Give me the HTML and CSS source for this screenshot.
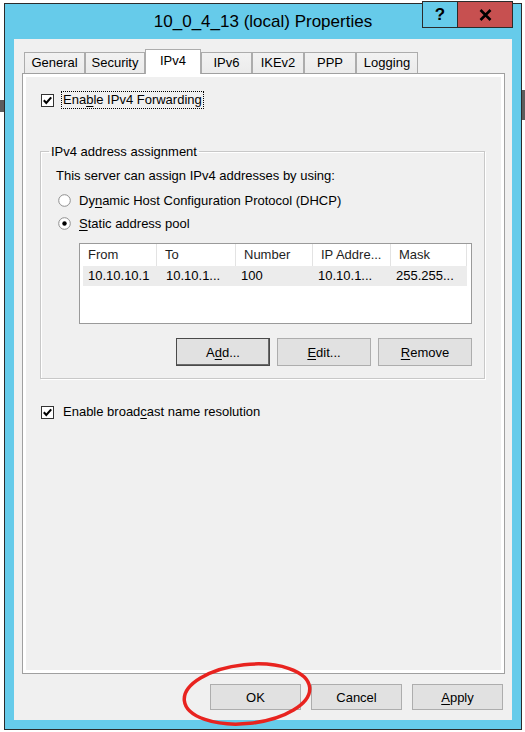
FILE: index.html
```html
<!DOCTYPE html>
<html>
<head>
<meta charset="utf-8">
<link rel="stylesheet" href="styles.css">
</head>
<body>
<div class="desk">
  <div class="window">
    <div class="titlebar">
      <span class="title">10_0_4_13 (local) Properties</span>
      <div class="caption">
        <span class="cbtn help">?</span>
        <span class="cbtn close">
          <svg width="13" height="12" viewBox="0 0 13 12"><path d="M1.5 1 L11.5 11 M11.5 1 L1.5 11" stroke="#000" stroke-width="2.6" fill="none"/></svg>
        </span>
      </div>
    </div>
    <div class="client">
      <div class="tabs">
        <span class="tab tab-general">General</span>
        <span class="tab tab-security">Security</span>
        <span class="tab tab-ipv4 selected">IPv4</span>
        <span class="tab tab-ipv6">IPv6</span>
        <span class="tab tab-ikev2">IKEv2</span>
        <span class="tab tab-ppp">PPP</span>
        <span class="tab tab-logging">Logging</span>
      </div>
      <div class="page">
        <div class="check">
          <svg class="cbox" width="13" height="13" viewBox="0 0 13 13"><rect x="0.5" y="0.5" width="12" height="12" fill="#fff" stroke="#333"/><path d="M2.8 6.2 L5.3 8.9 L10.2 3.4" stroke="#000" stroke-width="2.1" fill="none"/></svg>
          <span class="check-label focus">Ena<u>b</u>le IPv4 Forwarding</span>
        </div>
        <fieldset class="group">
          <legend>IPv4 address assignment</legend>
          <div class="group-body">
            <div class="line">This server can assign IPv4 addresses by using:</div>
            <div class="line radio-line">
              <svg class="radio" width="13" height="13" viewBox="0 0 13 13"><circle cx="6.5" cy="6.5" r="5.8" fill="#fff" stroke="#8f8f8f"/></svg>
              <span class="radio-label">Dy<u>n</u>amic Host Configuration Protocol (DHCP)</span>
            </div>
            <div class="line radio-line">
              <svg class="radio" width="13" height="13" viewBox="0 0 13 13"><circle cx="6.5" cy="6.5" r="5.8" fill="#fff" stroke="#8f8f8f"/><circle cx="6.5" cy="6.5" r="2.2" fill="#000"/></svg>
              <span class="radio-label"><u>S</u>tatic address pool</span>
            </div>
            <div class="listview">
              <div class="lv-head">
                <span class="lv-col">From</span>
                <span class="lv-col">To</span>
                <span class="lv-col">Number</span>
                <span class="lv-col">IP Addre...</span>
                <span class="lv-col">Mask</span>
                <span class="lv-col lv-rest"></span>
              </div>
              <div class="lv-row">
                <span class="lv-cell">10.10.10.1</span>
                <span class="lv-cell lv-to">10.10.1...</span>
                <span class="lv-cell">100</span>
                <span class="lv-cell">10.10.1...</span>
                <span class="lv-cell">255.255...</span>
              </div>
            </div>
            <div class="pool-buttons">
              <span class="btn btn-pool btn-default">A<u>d</u>d...</span>
              <span class="btn btn-pool"><u>E</u>dit...</span>
              <span class="btn btn-pool"><u>R</u>emove</span>
            </div>
          </div>
        </fieldset>
        <div class="check check-broadcast">
          <svg class="cbox" width="13" height="13" viewBox="0 0 13 13"><rect x="0.5" y="0.5" width="12" height="12" fill="#fff" stroke="#333"/><path d="M2.8 6.2 L5.3 8.9 L10.2 3.4" stroke="#000" stroke-width="2.1" fill="none"/></svg>
          <span class="check-label plain">Enable broad<u>c</u>ast name resolution</span>
        </div>
      </div>
      <div class="footer">
        <span class="btn btn-foot">OK</span>
        <span class="btn btn-foot">Cancel</span>
        <span class="btn btn-foot"><u>A</u>pply</span>
      </div>
    </div>
  </div>
  <svg class="highlight" width="140" height="72" viewBox="0 0 140 72">
    <ellipse cx="67" cy="34" rx="63" ry="29.5" transform="rotate(-6 67 34)" fill="none" stroke="#e8231f" stroke-width="3.5"/>
  </svg>
</div>
</body>
</html>
```
FILE: styles.css
```css
* { box-sizing: border-box; }
html, body { margin: 0; padding: 0; }
body {
  background: #ffffff;
  font-family: "Liberation Sans", Arial, sans-serif;
  font-size: 13px;
  color: #000;
}
u { text-decoration: underline; text-underline-offset: 2px; }

.desk {
  position: relative;
  width: 525px;
  height: 732px;
  overflow: hidden;
  padding: 3px 0 0 4px;
  background:
    linear-gradient(#5c5c5c, #5c5c5c) 0 100px / 4px 12px no-repeat,
    linear-gradient(#5c5c5c, #5c5c5c) 521px 90px / 4px 30px no-repeat,
    #ffffff;
}

.window {
  position: relative;
  width: 518px;
  height: 727px;
  border: 1px solid #2b2b2b;
  background: #66cbea;
  display: flex;
  flex-direction: column;
}

.titlebar {
  height: 35px;
  display: flex;
  align-items: center;
  justify-content: center;
  font-size: 17px;
  color: #000;
}

.caption {
  position: absolute;
  top: -3px;
  right: 8px;
  display: flex;
}
.cbtn {
  height: 27px;
  border: 1px solid #2b2b2b;
  display: flex;
  align-items: center;
  justify-content: center;
}
.help {
  width: 35px;
  border-right: none;
  background: #66cbea;
  font-weight: bold;
  font-size: 17px;
}
.close {
  width: 56px;
  background: #c75050;
}

.client {
  flex: 1;
  margin: 0 9px 9px;
  background: #f0f0f0;
  display: flex;
  flex-direction: column;
  padding: 10px 7px 10px 8px;
}

.tabs {
  display: flex;
  align-items: flex-end;
  height: 24px;
  margin-left: 2px;
  position: relative;
  z-index: 1;
}
.tab {
  height: 21px;
  border: 1px solid #acacac;
  border-bottom: none;
  background: linear-gradient(#f2f2f2, #ebebeb);
  display: flex;
  align-items: center;
  justify-content: center;
  padding-bottom: 1px;
}
.tab.selected {
  height: 25px;
  margin-bottom: -1px;
  background: #fff;
  padding-bottom: 3px;
}
.tab-general { width: 61px; }
.tab-security { width: 60px; }
.tab-ipv4 { width: 56px; }
.tab-ipv6 { width: 51px; }
.tab-ikev2 { width: 52px; }
.tab-ppp { width: 52px; }
.tab-logging { width: 62px; }

.page {
  flex: 1;
  border: 1px solid #a0a0a0;
  box-shadow: inset 0 0 0 3px #fff;
  background: #f0f0f0;
  padding: 17px 19px 0 17px;
}

.check {
  display: flex;
  align-items: center;
  height: 18px;
  margin-left: 1px;
}
.cbox { flex: none; }
.check-label { line-height: 16px; }
.check-label.focus {
  margin-left: 7px;
  border: 1px dotted #000;
  padding: 0 1px;
}
.check-label.plain { margin-left: 9px; }
.check-broadcast { margin-top: 24px; }

.group {
  margin: 34px 0 0 0;
  padding: 0;
  border: 1px solid #c8c8c8;
  box-shadow: inset 1px 1px 0 #fff, 1px 1px 0 #fff;
  min-width: 0;
}
.group legend {
  margin-left: 8px;
  padding: 0 2px;
  line-height: 17px;
}
.group-body {
  padding: 4px 12px 12px 15px;
}
.line {
  height: 22px;
  display: flex;
  align-items: center;
}
.radio-line { margin-top: 3px; margin-left: 2px; }
.radio-line + .radio-line { margin-top: 1px; }
.radio { flex: none; }
.radio-label { margin-left: 8px; }

.listview {
  margin-top: 9px;
  margin-left: 23px;
  height: 81px;
  border: 1px solid #9a9a9a;
  background: #fff;
}
.lv-head {
  display: grid;
  grid-template-columns: 77px 79px 77px 78px 76px 1fr;
  height: 22px;
}
.lv-col {
  border-right: 1px solid #e3e3e3;
  padding-left: 8px;
  line-height: 22px;
  color: #1e1e1e;
  white-space: nowrap;
}
.lv-rest { border-right: none; }
.lv-row {
  display: grid;
  grid-template-columns: 74px 79px 77px 78px 76px;
  width: 384px;
  margin-left: 3px;
  height: 20px;
  background: #ececec;
}
.lv-cell {
  padding-left: 5px;
  line-height: 20px;
  white-space: nowrap;
}
.lv-to { padding-left: 9px; }

.pool-buttons {
  margin-top: 14px;
  display: flex;
  justify-content: flex-end;
  gap: 7px;
}
.btn {
  display: flex;
  align-items: center;
  justify-content: center;
  background: #e1e1e1;
  border: 1px solid #adadad;
}
.btn-pool { width: 94px; height: 28px; }
.btn-default {
  border-color: #4a4a4a;
  box-shadow: inset -1px -1px 0 #6a6a6a;
}

.footer {
  margin-top: 10px;
  display: flex;
  justify-content: flex-end;
  gap: 10px;
  padding-right: 2px;
}
.btn-foot { width: 91px; height: 26px; }

.highlight {
  position: absolute;
  left: 180px;
  top: 660px;
}
```
